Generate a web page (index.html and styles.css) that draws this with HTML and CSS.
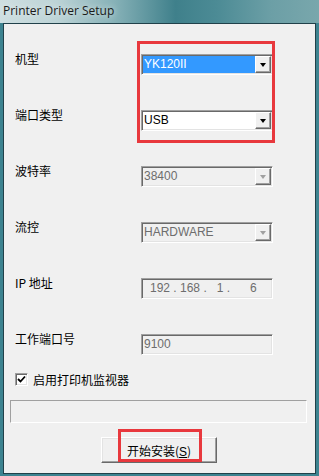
FILE: index.html
```html
<!DOCTYPE html>
<html>
<head>
  <title>Printer Driver Setup</title>
  <meta charset="UTF-8">
  <link rel="stylesheet" href="styles.css">
</head>
<body>
  <div class="window">
    <div class="titlebar">Printer Driver Setup</div>

    <div class="client">
      <div class="form">
        <span class="label">机型</span>
        <div class="combo">
          <span class="value selected">YK120II</span>
          <span class="drop"><i class="arrow"></i></span>
        </div>

        <span class="label">端口类型</span>
        <div class="combo">
          <span class="value">USB</span>
          <span class="drop"><i class="arrow"></i></span>
        </div>

        <span class="label">波特率</span>
        <div class="combo disabled">
          <span class="value">38400</span>
          <span class="drop"><i class="arrow"></i></span>
        </div>

        <span class="label">流控</span>
        <div class="combo disabled">
          <span class="value">HARDWARE</span>
          <span class="drop"><i class="arrow"></i></span>
        </div>

        <span class="label">IP 地址</span>
        <div class="combo disabled">
          <span class="value ip">192 . 168 .   1 .      6</span>
        </div>

        <span class="label">工作端口号</span>
        <div class="combo disabled">
          <span class="value">9100</span>
        </div>
      </div>

      <label class="check">
        <span class="box">
          <svg width="9" height="9" viewBox="0 0 9 9"><path d="M1 4 L3.5 6.5 L8 1.5" fill="none" stroke="#000" stroke-width="1.8"/></svg>
        </span>
        启用打印机监视器
      </label>

      <div class="progress"></div>

      <button class="btn">开始安装(<u>S</u>)</button>

      <!-- red annotation frames drawn over the dialog -->
      <div class="mark mark-combos"></div>
      <div class="mark mark-button"></div>
    </div>
  </div>
</body>
</html>
```

FILE: styles.css
```css
body {
  margin: 0;
  font-family: "Noto Sans CJK SC", "Liberation Sans", sans-serif;
  font-size: 12px;
  color: #000;
}

.window {
  width: 319px;
  height: 476px;
  box-sizing: border-box;
  padding: 0 3px 2px 3px;
  background-color: #3d8390; /* frame */
  display: flex;
  flex-direction: column;
}

.titlebar {
  height: 23px;
  margin: 0 -3px;
  padding-left: 3px;
  line-height: 22px;
  font-family: "Open Sans", "Noto Sans", sans-serif;
  font-size: 12px;
  color: #1a1a1a;
  text-shadow: 0 0 6px #e8f0f0;
  background: linear-gradient(90deg, #cfdfe1 0%, #bcd3d6 18%, #86b1b7 36%, #3f808b 55%, #4c8b95 68%, #6c9fa6 85%, #79a7ac 100%);
}

.client {
  flex-grow: 1;
  position: relative;
  border: 1px solid #21414a;
  background-color: #f0f0f0;
  padding: 30px 0 0 11px;
}

.form {
  display: grid;
  grid-template-columns: 126px 132px;
  grid-auto-rows: 21px;
  row-gap: 35px;
}

.label {
  line-height: 12px;
  margin-top: -1px;
}

.combo {
  display: flex;
  box-sizing: border-box;
  height: 21px;
  border: 1px solid;
  border-color: #a0a0a0 #fff #fff #a0a0a0;
  box-shadow: inset 1px 1px #696969, inset -1px -1px #e3e3e3;
  background-color: #fff;
  padding: 1px;
  font-family: "Liberation Sans", sans-serif;
  font-size: 12px;
}
.combo .value {
  flex-grow: 1;
  padding-left: 1px;
  line-height: 17px;
  white-space: pre;
}
.combo .selected {
  background-color: #3399ff;
  color: #fff;
}
.combo .drop {
  width: 16px;
  box-sizing: border-box;
  background-color: #f0f0f0;
  border: 1px solid;
  border-color: #fff #696969 #696969 #fff;
  box-shadow: inset -1px -1px #a0a0a0;
  display: flex;
  align-items: center;
  justify-content: center;
}
.arrow {
  width: 0;
  height: 0;
  border-left: 3.5px solid transparent;
  border-right: 3.5px solid transparent;
  border-top: 4px solid #000;
}

.combo.disabled {
  background-color: #f0f0f0;
  color: #6d6d6d;
}
.combo.disabled .arrow {
  border-top-color: #a0a0a0;
}
.combo .ip {
  padding-left: 7px;
}

.check {
  display: flex;
  align-items: center;
  gap: 5px;
  margin-top: 18px;
  height: 13px;
}
.check .box {
  width: 13px;
  height: 13px;
  box-sizing: border-box;
  border: 1px solid;
  border-color: #a0a0a0 #fff #fff #a0a0a0;
  box-shadow: inset 1px 1px #696969, inset -1px -1px #e3e3e3;
  background-color: #fff;
  display: flex;
  align-items: center;
  justify-content: center;
}

.progress {
  width: 297px;
  height: 23px;
  box-sizing: border-box;
  margin: 14px 0 0 -5px;
  border: 1px solid;
  border-color: #a0a0a0 #fff #fff #a0a0a0;
  background-color: #f0f0f0;
}

.btn {
  display: block;
  width: 116px;
  height: 26px;
  margin: 14px 0 0 86px;
  padding: 0;
  box-sizing: border-box;
  border: 1px solid;
  border-color: #fff #696969 #696969 #fff;
  box-shadow: inset -1px -1px #a0a0a0, inset 1px 1px #e3e3e3;
  background-color: #f0f0f0;
  font-family: "Noto Sans CJK SC", "Liberation Sans", sans-serif;
  font-size: 12px;
  color: #000;
}
.btn u {
  font-family: "Liberation Sans", sans-serif;
}

.mark {
  position: absolute;
  box-sizing: border-box;
  border: 3px solid #e8383d;
}
.mark-combos {
  left: 133px;
  top: 17px;
  width: 138px;
  height: 102px;
}
.mark-button {
  left: 114px;
  top: 405px;
  width: 84px;
  height: 33px;
}
```
